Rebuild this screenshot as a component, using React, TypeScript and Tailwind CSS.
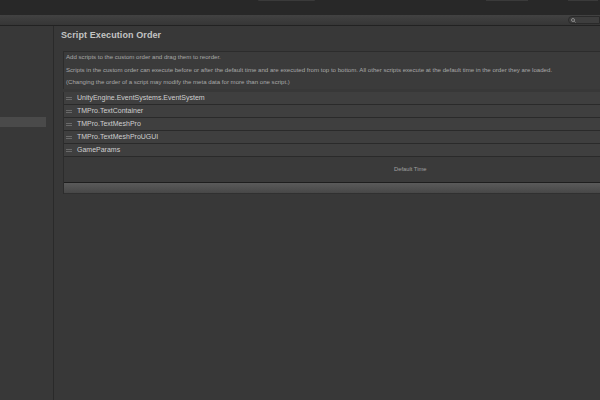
import React from "react";

const scripts = [
  "UnityEngine.EventSystems.EventSystem",
  "TMPro.TextContainer",
  "TMPro.TextMeshPro",
  "TMPro.TextMeshProUGUI",
  "GameParams",
];

function Handle() {
  return (
    <div className="flex w-[6px] flex-col gap-[1px]">
      <div className="h-px bg-[#6a6a6a]" />
      <div className="h-px bg-[#6a6a6a]" />
    </div>
  );
}

export default function App() {
  return (
    <div
      className="flex h-[400px] w-[600px] flex-col overflow-hidden bg-[#383838]"
      style={{ fontFamily: '"Liberation Sans", Arial, sans-serif' }}
    >
      {/* window top strip */}
      <div className="flex h-[15px] items-start bg-[#282828]">
        <div className="ml-[258px] h-px w-[57px] rounded-b bg-[#3a3a3a]" />
        <div className="ml-auto mr-[40px] h-px w-[42px] bg-[#3a3a3a]" />
        <div className="mr-[2px] h-px w-[30px] bg-[#3a3a3a]" />
      </div>

      {/* toolbar */}
      <div className="flex h-[11px] items-center border-b border-[#222] bg-gradient-to-b from-[#424242] to-[#363636]">
        <div className="ml-auto flex h-[8px] w-[32px] items-center rounded-l-full border border-[#2a2a2a] bg-[#3e3e3e] pl-[2px]">
          <svg width="5" height="5" viewBox="0 0 10 10" fill="none" stroke="#8a8a8a" strokeWidth="2">
            <circle cx="4" cy="4" r="3" />
            <path d="M6.5 6.5L9 9" />
          </svg>
        </div>
      </div>

      <div className="flex flex-1">
        {/* left sidebar */}
        <div className="w-[54px] border-r border-[#2a2a2a] pt-[91px]">
          <div className="h-[10px] w-[46px] bg-[#4a4a4a]" />
        </div>

        {/* main */}
        <div className="flex flex-1 flex-col pl-[7px]">
          <div className="pt-[3px] text-[9px] font-bold leading-[13px] tracking-[0.1px] text-[#c4c4c4]">
            Script Execution Order
          </div>

          <div className="ml-[2px] mt-[9px] flex h-[38px] flex-col gap-[5.5px] border-l border-t border-[#2c2c2c] bg-[#3b3b3b] pl-[2px] pt-[1px] text-[6.1px] leading-[7px] text-[#a8a8a8]">
            <div>Add scripts to the custom order and drag them to reorder.</div>
            <div className="whitespace-nowrap">
              Scripts in the custom order can execute before or after the default time and are executed from top to bottom. All other scripts execute at the default time in the order they are loaded.
            </div>
            <div>(Changing the order of a script may modify the meta data for more than one script.)</div>
          </div>

          <div className="ml-[2px] mt-[3px] flex flex-col border-l border-[#2c2c2c]">
            {scripts.map((s) => (
              <div
                key={s}
                className="flex h-[13px] items-center gap-[5px] border-b border-[#2a2a2a] bg-[#3f3f3f] pl-[2px] text-[7px] text-[#cfcfcf]"
              >
                <Handle />
                <span>{s}</span>
              </div>
            ))}
            <div className="flex h-[25px] items-center bg-[#3a3a3a] pl-[330px] text-[5.8px] text-[#a0a0a0]">
              Default Time
            </div>
            <div className="h-[12px] border-y border-[#1e1e1e] border-b-[#303030] bg-gradient-to-b from-[#5a5a5a] to-[#474747]" />
          </div>
        </div>
      </div>
    </div>
  );
}
